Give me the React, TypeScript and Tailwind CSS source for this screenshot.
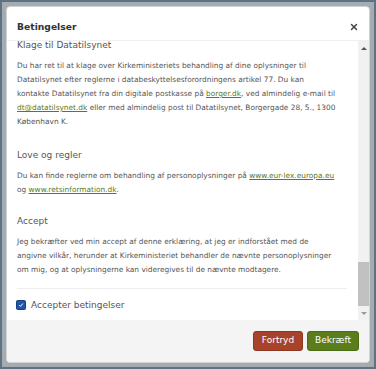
import React from 'react';
import { X } from 'lucide-react';

const font = { fontFamily: '"DejaVu Sans", Verdana, sans-serif' };

const Link = ({ children }: { children: React.ReactNode }) => (
  <a href="#" className="text-[#5b7a22] underline">
    {children}
  </a>
);

const Section = ({ title, children }: { title: string; children: React.ReactNode }) => (
  <div className="mb-[20px]">
    <h3 className="text-[9px] leading-[12px] text-[#555]">{title}</h3>
    <p className="mt-[8px] whitespace-nowrap text-[7.4px] leading-[14px] text-[#555]">{children}</p>
  </div>
);

const App = () => {
  return (
    <div
      style={font}
      className="h-[369px] w-[376px] border-2 border-[#5d7384] bg-[#a4acb1] p-[4px]"
    >
      <div className="flex h-full flex-col overflow-hidden rounded-[4px] border border-[#d4d4d4] bg-white">
        <div className="flex h-[34px] items-center justify-between border-b border-[#f0f0f0] pl-[10px] pr-[10px] pt-[7px]">
          <h2 className="text-[9.2px] font-bold text-[#333]">Betingelser</h2>
          <X size={10} strokeWidth={3.5} className="text-[#444]" />
        </div>

        <div className="flex h-[279px] overflow-hidden">
          <div className="flex-1 -mt-[2px] pl-[10px] pr-[11px]">
            <Section title="Klage til Datatilsynet">
              Du har ret til at klage over Kirkeministeriets behandling af dine oplysninger til
              <br />
              Datatilsynet efter reglerne i databeskyttelsesforordningens artikel 77. Du kan
              <br />
              kontakte Datatilsynet fra din digitale postkasse på <Link>borger.dk</Link>, ved
              almindelig e-mail til
              <br />
              <Link>dt@datatilsynet.dk</Link> eller med almindelig post til Datatilsynet,
              Borgergade 28, 5., 1300
              <br />
              København K.
            </Section>
            <Section title="Love og regler">
              Du kan finde reglerne om behandling af personoplysninger på{' '}
              <Link>www.eur-lex.europa.eu</Link>
              <br />
              og <Link>www.retsinformation.dk</Link>.
            </Section>
            <div className="-mt-[2px]">
              <h3 className="text-[9px] leading-[12px] text-[#555]">Accept</h3>
              <p className="mt-[8px] whitespace-nowrap text-[7.4px] leading-[14px] text-[#555]">
                Jeg bekræfter ved min accept af denne erklæring, at jeg er indforstået med de
                <br />
                angivne vilkår, herunder at Kirkeministeriet behandler de nævnte personoplysninger
                <br />
                om mig, og at oplysningerne kan videregives til de nævnte modtagere.
              </p>
              <div className="mt-[11px] border-t border-[#eeeeee] pt-[9px]">
                <label className="flex items-center gap-[6px] text-[9px] leading-[14px] text-[#555]">
                  <span className="flex h-[8px] w-[8px] items-center justify-center rounded-[1px] bg-[#1f55b0] ring-1 ring-[#1b3f7a]">
                    <svg viewBox="0 0 10 10" className="h-[6px] w-[6px]">
                      <path d="M2 5.2 4.2 7.4 8 2.6" fill="none" stroke="#fff" strokeWidth="1.6" />
                    </svg>
                  </span>
                  Accepter betingelser
                </label>
              </div>
            </div>
          </div>

          <div className="flex w-[11px] flex-col items-center bg-[#f1f1f1]">
            <div className="flex h-[14px] items-center">
              <span className="h-0 w-0 border-x-[3px] border-b-[3px] border-x-transparent border-b-[#555]" />
            </div>
            <div className="mt-[207px] h-[44px] w-[11px] bg-[#c1c1c1]" />
            <div className="flex h-[14px] items-center">
              <span className="h-0 w-0 border-x-[3px] border-t-[3px] border-x-transparent border-t-[#999]" />
            </div>
          </div>
        </div>

        <div className="flex flex-1 items-center justify-end gap-[4px] bg-[#f4f4f4] pr-[10px]">
          <button className="h-[20px] w-[50px] rounded-[3px] border border-[#8f3520] bg-[#a8432b] text-[9px] text-white">
            Fortryd
          </button>
          <button className="h-[20px] w-[52px] rounded-[3px] border border-[#4b6a14] bg-[#5b7d1b] text-[9px] text-white">
            Bekræft
          </button>
        </div>
      </div>
    </div>
  );
};

export default App;
